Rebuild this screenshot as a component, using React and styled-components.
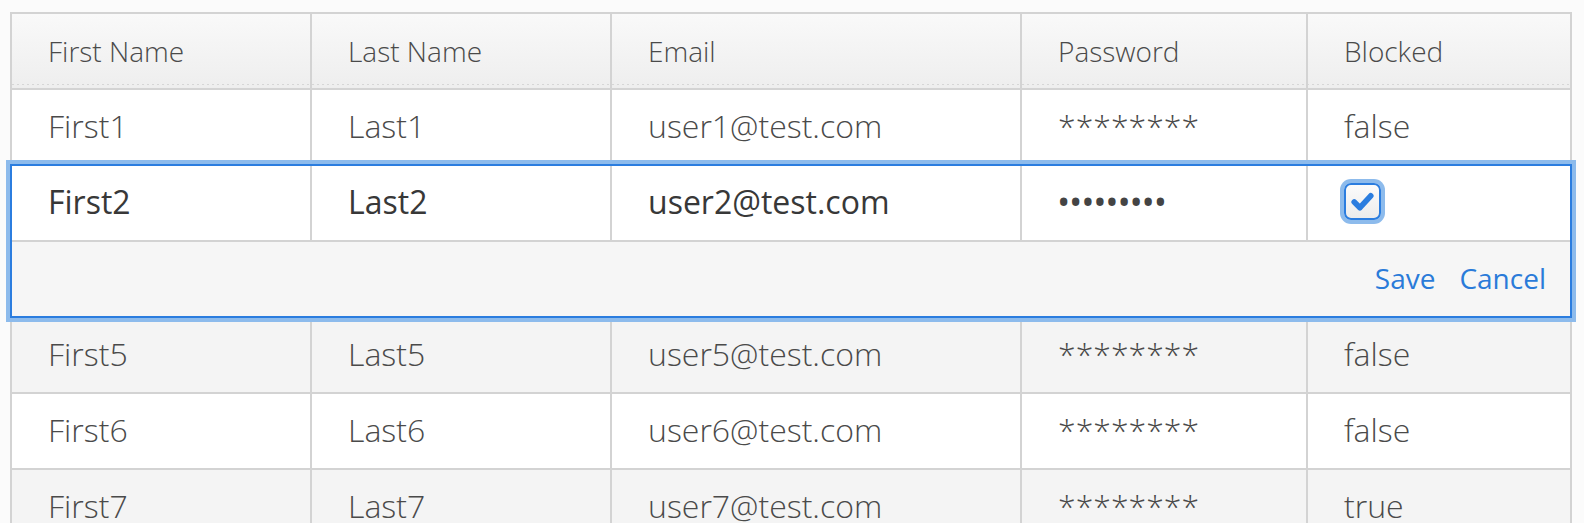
import React from 'react';
import styled, { createGlobalStyle } from 'styled-components';

const GlobalStyle = createGlobalStyle`
  body {
    margin: 0;
    background: #fbfbfb;
    font-family: "Open Sans", "Liberation Sans", sans-serif;
  }
`;

const users = [
  { first: 'First1', last: 'Last1', email: 'user1@test.com', blocked: 'false' },
  { first: 'First2', last: 'Last2', email: 'user2@test.com', blocked: 'true', editing: true },
  { first: 'First5', last: 'Last5', email: 'user5@test.com', blocked: 'false' },
  { first: 'First6', last: 'Last6', email: 'user6@test.com', blocked: 'false' },
  { first: 'First7', last: 'Last7', email: 'user7@test.com', blocked: 'true' },
];

const Page = styled.div`
  padding: 12px 12px 0 10px;
`;

const Table = styled.div`
  border: 2px solid #d3d3d3;
  border-bottom: none;
  background: #fff;
`;

const Row = styled.div`
  display: grid;
  grid-template-columns: 298px 300px 410px 286px 1fr;
  height: 76px;
  box-sizing: border-box;
  border-bottom: 2px solid #d3d3d3;
  background: ${p => (p.$striped ? '#f4f4f4' : '#fff')};
`;

const HeaderRow = styled(Row)`
  background:
    linear-gradient(to right, #d6d6d6 50%, transparent 50%) left bottom 3px / 5px 1px repeat-x,
    linear-gradient(#f9f9f9, #eeeeee);
`;

const Cell = styled.div`
  display: flex;
  align-items: center;
  padding-left: 36px;
  padding-bottom: ${p => (p.$header ? '0' : '3px')};
  font-size: ${p => (p.$header ? '28px' : '32px')};
  font-weight: ${p => (p.$bold ? 400 : 300)};
  color: ${p => (p.$bold ? '#383838' : '#4a4a4a')};
  white-space: nowrap;
  & + & {
    border-left: 2px solid #d3d3d3;
  }
`;

const Editor = styled.div`
  position: relative;
  z-index: 1;
  margin: -2px -2px 0;
  border: 2px solid #2b7ddf;
  box-shadow: 0 0 0 4px #8dbbec;
  background: #fff;
`;

const ActionBar = styled.div`
  display: flex;
  justify-content: flex-end;
  align-items: center;
  gap: 24px;
  height: 74px;
  padding-right: 24px;
  padding-bottom: 2px;
  box-sizing: border-box;
  background: #f6f6f6;
`;

const Action = styled.a`
  font-size: 28px;
  font-weight: 400;
  color: #2a7bd9;
  cursor: pointer;
`;

const Dots = styled.span`
  font-size: 30px;
  font-weight: 600;
  letter-spacing: 0.8px;
  color: #444;
`;

const Check = styled.span`
  width: 37px;
  height: 37px;
  box-sizing: border-box;
  border: 2px solid #2b7ddf;
  border-radius: 7px;
  box-shadow: 0 0 0 4px #8dbbec;
  background: linear-gradient(#fbfbfb, #ececec);
  display: flex;
  align-items: center;
  justify-content: center;
`;

const Checkbox = () => (
  <Check>
    <svg width="33" height="33" viewBox="0 0 32 32">
      <path d="M8 16.5 L13.5 22 L24 10.5" fill="none" stroke="#2b7ddf" strokeWidth="5.5" strokeLinecap="round" strokeLinejoin="round" />
    </svg>
  </Check>
);

function App() {
  return (
    <Page>
      <GlobalStyle />
      <Table>
        <HeaderRow>
          <Cell $header>First Name</Cell>
          <Cell $header>Last Name</Cell>
          <Cell $header>Email</Cell>
          <Cell $header>Password</Cell>
          <Cell $header>Blocked</Cell>
        </HeaderRow>
        {users.map((u, i) =>
          u.editing ? (
            <Editor key={u.email}>
              <Row>
                <Cell $bold>{u.first}</Cell>
                <Cell $bold>{u.last}</Cell>
                <Cell $bold>{u.email}</Cell>
                <Cell><Dots>•••••••••</Dots></Cell>
                <Cell><Checkbox /></Cell>
              </Row>
              <ActionBar>
                <Action>Save</Action>
                <Action>Cancel</Action>
              </ActionBar>
            </Editor>
          ) : (
            <Row key={u.email} $striped={i % 2 === 0 && i > 0}>
              <Cell>{u.first}</Cell>
              <Cell>{u.last}</Cell>
              <Cell>{u.email}</Cell>
              <Cell>********</Cell>
              <Cell>{u.blocked}</Cell>
            </Row>
          )
        )}
      </Table>
    </Page>
  );
}

export default App;
